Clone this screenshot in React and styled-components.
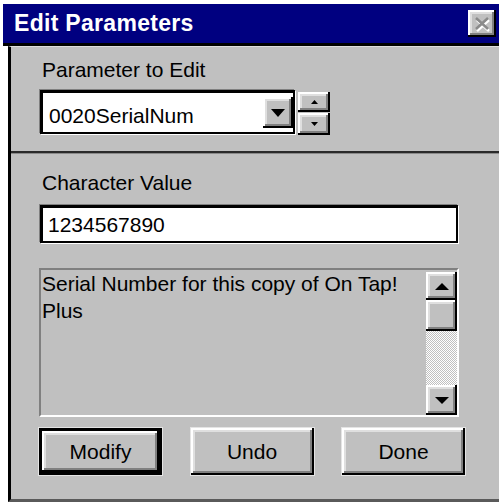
import React from 'react'
import styled, { createGlobalStyle } from 'styled-components'

const GlobalStyle = createGlobalStyle`
  html, body {
    margin: 0;
    padding: 0;
    background: #fff;
  }
  body {
    font-family: "Liberation Sans", Arial, sans-serif;
  }
`

const raised = `
  background: #c0c0c0;
  box-shadow:
    inset -2px -2px 0 #000,
    inset 2px 2px 0 #fff,
    inset -4px -4px 0 #808080,
    inset 4px 4px 0 #dfdfdf;
`

const Window = styled.div`
  width: 499px;
  height: 502px;
  padding-top: 4px;
  box-sizing: border-box;
  display: flex;
  flex-direction: column;
  overflow: hidden;
`

const TitleBar = styled.div`
  height: 39px;
  margin-left: 3px;
  background: #000080;
  border-bottom: 3px solid #000;
  display: flex;
  align-items: center;
  justify-content: space-between;
  padding: 0 3px 0 11px;
  flex-shrink: 0;
`

const TitleText = styled.span`
  color: #fff;
  font-weight: bold;
  font-size: 23px;
  letter-spacing: 0.3px;
`

const CloseButton = styled.div`
  width: 28px;
  height: 27px;
  ${raised}
  display: flex;
  align-items: center;
  justify-content: center;
`

const Body = styled.div`
  flex: 1;
  margin-left: 8px;
  background: #c0c0c0;
  border-left: 3px solid #000;
  border-top: 1px solid #dfdfdf;
  border-bottom: 3px solid #5a5a5a;
  display: flex;
  flex-direction: column;
`

const Section = styled.div`
  padding: ${p => p.$top}px 41px 0 29px;
  display: flex;
  flex-direction: column;
`

const Label = styled.div`
  font-size: 21px;
  line-height: 24px;
  color: #000;
  padding-left: 2px;
`

const ComboRow = styled.div`
  margin-top: 8px;
  display: flex;
  align-items: flex-start;
  gap: 3px;
`

const sunken = `
  box-sizing: border-box;
  border-style: solid;
  border-width: 3px 2px 2px 3px;
  border-color: #000;
  box-shadow: -1px -1px 0 #808080, 1px 1px 0 #fff;
`

const Combo = styled.div`
  ${sunken}
  width: 255px;
  height: 44px;
  background: #fff;
  display: flex;
  align-items: center;
  justify-content: space-between;
`

const FieldText = styled.span`
  font-size: 21px;
  line-height: 24px;
  padding-left: ${p => p.$pad || 5}px;
  padding-top: ${p => p.$drop || 0}px;
`

const DropButton = styled.div`
  width: 30px;
  height: 31px;
  ${raised}
  display: flex;
  align-items: center;
  justify-content: center;
`

const Spin = styled.div`
  margin-top: 2px;
  display: flex;
  flex-direction: column;
  gap: 1px;
`

const SpinButton = styled.div`
  width: 32px;
  height: ${p => p.$h}px;
  ${raised}
  display: flex;
  align-items: center;
  justify-content: center;
`

const Separator = styled.div`
  margin-top: 16px;
  border-top: 2px solid #2a2a2a;
  border-bottom: 1px solid #8a8a8a;
`

const Input = styled.div`
  ${sunken}
  margin-top: 10px;
  height: 38px;
  background: #fff;
  display: flex;
  align-items: center;
`

const DescBox = styled.div`
  margin-top: 25px;
  margin-left: -1px;
  width: 420px;
  height: 149px;
  box-sizing: border-box;
  border-style: solid;
  border-width: 2px;
  border-color: #808080 #fff #fff #808080;
  display: flex;
  justify-content: space-between;
`

const DescText = styled.div`
  font-size: 21px;
  line-height: 27px;
  padding-left: 1px;
  width: 382px;
`

const ScrollBar = styled.div`
  width: 31px;
  display: flex;
  flex-direction: column;
  padding-top: 2px;
`

const ScrollButton = styled.div`
  height: ${p => p.$h}px;
  ${raised}
  display: flex;
  align-items: center;
  justify-content: center;
  flex-shrink: 0;
`

const Track = styled.div`
  flex: 1;
  background: repeating-conic-gradient(#c0c0c0 0 25%, #fff 0 50%) 0 0 / 2px 2px;
`

const ButtonRow = styled.div`
  margin-top: 11px;
  margin-left: -1px;
  width: 426px;
  display: flex;
  justify-content: space-between;
`

const Button = styled.div`
  width: 123px;
  height: 47px;
  box-sizing: border-box;
  ${raised}
  border: ${p => (p.$default ? '3px solid #000' : 'none')};
  outline: 1px solid #e4e4e4;
  display: flex;
  align-items: center;
  justify-content: center;
  font-size: 21px;
  color: #000;
`

const Arrow = ({ dir = 'down', w = 14, h = 7 }) => (
  <svg width={w} height={h} viewBox={`0 0 ${w} ${h}`}>
    <polygon
      points={dir === 'down' ? `0,0 ${w},0 ${w / 2},${h}` : `0,${h} ${w},${h} ${w / 2},0`}
      fill="#000"
    />
  </svg>
)

const CloseGlyph = () => (
  <svg width="18" height="16" viewBox="0 0 18 16">
    <path d="M3 3 L15 14 M15 3 L3 14" stroke="#fff" strokeWidth="2.5" transform="translate(1 1)" />
    <path d="M3 2 L15 13 M15 2 L3 13" stroke="#8a8a8a" strokeWidth="2.5" />
  </svg>
)

export default function App() {
  return (
    <>
      <GlobalStyle />
      <Window>
        <TitleBar>
          <TitleText>Edit Parameters</TitleText>
          <CloseButton>
            <CloseGlyph />
          </CloseButton>
        </TitleBar>
        <Body>
          <Section $top={11}>
            <Label>Parameter to Edit</Label>
            <ComboRow>
              <Combo>
                <FieldText $pad={6} $drop={6}>0020SerialNum</FieldText>
                <DropButton>
                  <Arrow dir="down" w={14} h={8} />
                </DropButton>
              </Combo>
              <Spin>
                <SpinButton $h={20}>
                  <Arrow dir="up" w={7} h={4} />
                </SpinButton>
                <SpinButton $h={22}>
                  <Arrow dir="down" w={7} h={4} />
                </SpinButton>
              </Spin>
            </ComboRow>
          </Section>
          <Separator />
          <Section $top={17}>
            <Label>Character Value</Label>
            <Input>
              <FieldText $pad={5}>1234567890</FieldText>
            </Input>
            <DescBox>
              <DescText>
                Serial Number for this copy of On Tap!
                <br />
                Plus
              </DescText>
              <ScrollBar>
                <ScrollButton $h={28}>
                  <Arrow dir="up" w={14} h={7} />
                </ScrollButton>
                <ScrollButton $h={31} />
                <Track />
                <ScrollButton $h={30}>
                  <Arrow dir="down" w={14} h={7} />
                </ScrollButton>
              </ScrollBar>
            </DescBox>
            <ButtonRow>
              <Button $default>Modify</Button>
              <Button>Undo</Button>
              <Button>Done</Button>
            </ButtonRow>
          </Section>
        </Body>
      </Window>
    </>
  )
}
